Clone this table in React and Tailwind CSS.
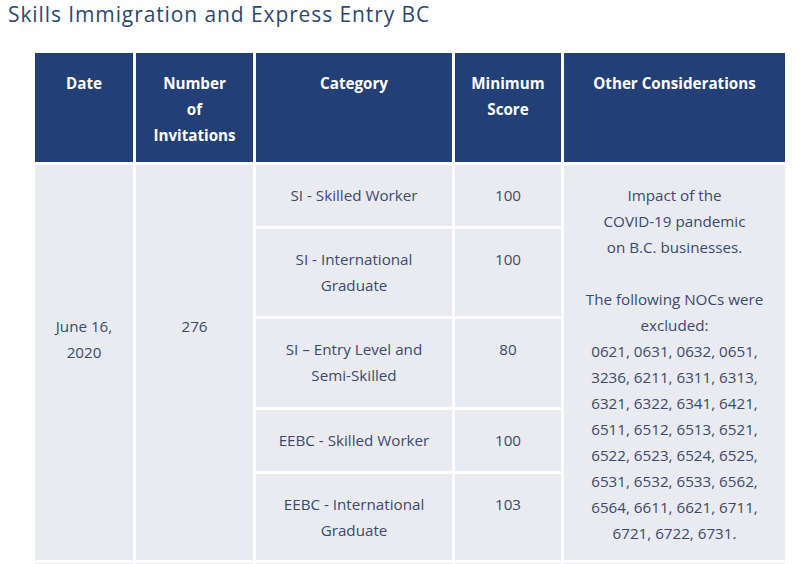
import React from "react";

const headers = [
    { label: ["Date"], width: "w-[98px]" },
    { label: ["Number", "of", "Invitations"], width: "w-[117px]" },
    { label: ["Category"], width: "w-[196px]" },
    { label: ["Minimum", "Score"], width: "w-[106px]" },
    { label: ["Other Considerations"], width: "w-[221px]" },
];

const draws = [
    { category: ["SI - Skilled Worker"], score: "100", h: "h-[61px]" },
    { category: ["SI - International", "Graduate"], score: "100", h: "h-[87px]" },
    { category: ["SI \u2013 Entry Level and", "Semi-Skilled"], score: "80", h: "h-[87px]" },
    { category: ["EEBC - Skilled Worker"], score: "100", h: "h-[61px]" },
    { category: ["EEBC - International", "Graduate"], score: "103", h: "h-[86px]" },
];

const nocs = [
    "0621, 0631, 0632, 0651,",
    "3236, 6211, 6311, 6313,",
    "6321, 6322, 6341, 6421,",
    "6511, 6512, 6513, 6521,",
    "6522, 6523, 6524, 6525,",
    "6531, 6532, 6533, 6562,",
    "6564, 6611, 6621, 6711,",
    "6721, 6722, 6731.",
];

const cell = "bg-[#e9ebf1] text-center align-top px-1 pt-[17px] pb-[14px]";

const Lines = ({ lines }) =>
    lines.map((l, i) => (
        <React.Fragment key={i}>
            {i > 0 && <br />}
            {l}
        </React.Fragment>
    ));

const App = () => {
    return (
        <div
            className="bg-white min-h-screen overflow-hidden"
            style={{ fontFamily: '"Open Sans", "Noto Sans", sans-serif' }}
        >
            <h1 className="pl-[8px] text-[21px] leading-[29px] text-[#2c4870] tracking-[0.9px]">
                Skills Immigration and Express Entry BC
            </h1>

            <table className="ml-[32px] mt-[21px] table-fixed border-separate border-spacing-[3px] text-[15.2px] leading-[26px] text-[#3b4a6c]">
                <thead>
                    <tr>
                        {headers.map((h, i) => (
                            <th
                                key={i}
                                className={`${h.width} h-[109px] bg-[#233f78] text-white font-bold text-[15.2px] align-top text-center px-1 pt-[17px] pb-[14px]`}
                            >
                                <Lines lines={h.label} />
                            </th>
                        ))}
                    </tr>
                </thead>
                <tbody>
                    {draws.map((d, i) => (
                        <tr key={i} className={d.h}>
                            {i === 0 && (
                                <>
                                    <td rowSpan={5} className="bg-[#e9ebf1] text-center align-top px-1 pt-[148px]">
                                        June 16,
                                        <br />
                                        2020
                                    </td>
                                    <td rowSpan={5} className="bg-[#e9ebf1] text-center align-top px-1 pt-[148px]">
                                        276
                                    </td>
                                </>
                            )}
                            <td className={cell}>
                                <Lines lines={d.category} />
                            </td>
                            <td className={cell}>{d.score}</td>
                            {i === 0 && (
                                <td rowSpan={5} className={cell}>
                                    Impact of the
                                    <br />
                                    COVID-19 pandemic
                                    <br />
                                    on B.C. businesses.
                                    <br />
                                    <br />
                                    The following NOCs were
                                    <br />
                                    excluded:
                                    <br />
                                    <Lines lines={nocs} />
                                </td>
                            )}
                        </tr>
                    ))}
                    <tr className="h-[60px]">
                        <td className="bg-[#e9ebf1]"></td>
                        <td className="bg-[#e9ebf1]"></td>
                        <td className="bg-[#e9ebf1]"></td>
                        <td className="bg-[#e9ebf1]"></td>
                        <td className="bg-[#e9ebf1]"></td>
                    </tr>
                </tbody>
            </table>
        </div>
    );
};

export default App;
